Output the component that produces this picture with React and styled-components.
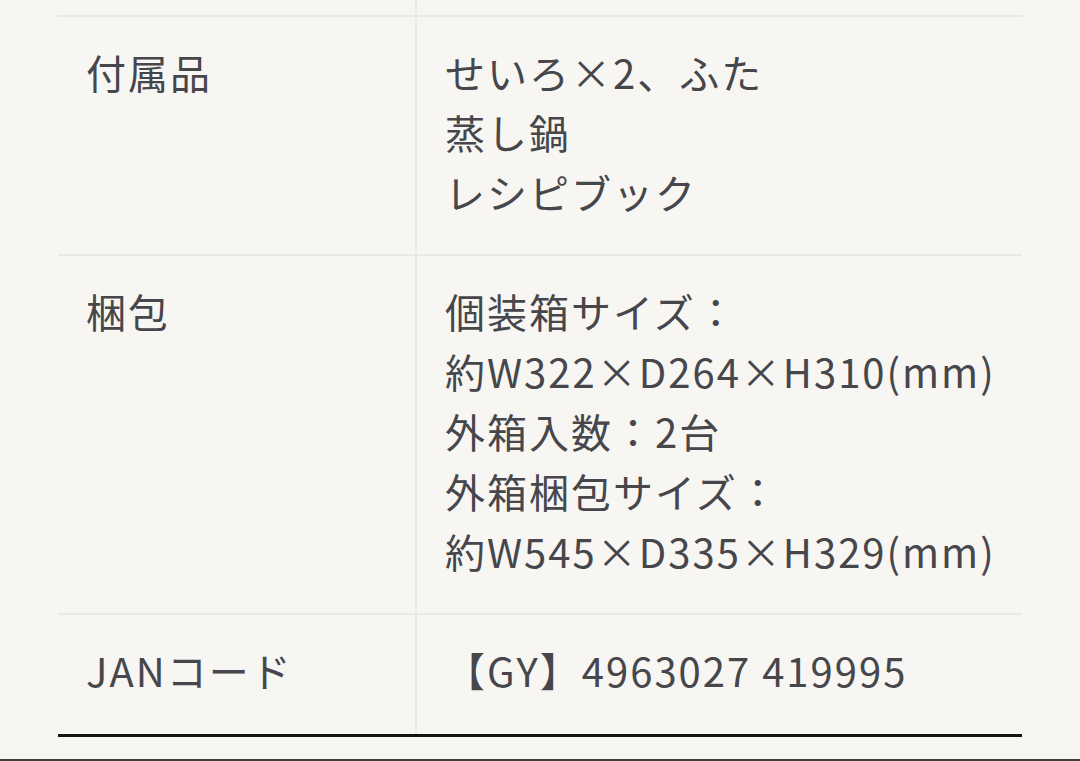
import React from "react";
import styled, { createGlobalStyle } from "styled-components";

const GlobalStyle = createGlobalStyle`
  html, body {
    margin: 0;
    padding: 0;
    background: #f7f6f3;
  }
  body {
    font-family: "Noto Sans CJK JP", "Noto Sans", sans-serif;
    color: #46464b;
  }
`;

const Page = styled.div`
  height: 761px;
  display: flex;
  flex-direction: column;
  overflow: hidden;
`;

const Content = styled.div`
  flex: 1;
  padding: 0 58px;
`;

const Table = styled.div`
  display: grid;
  grid-template-columns: 359px 1fr;
  border-bottom: 3px solid #141414;
`;

const Cell = styled.div`
  padding: ${(p) =>
    p.$tail ? "0" : p.$last ? "25px 0 34px 28px" : "25px 0 32px 28px"};
  height: ${(p) => (p.$tail ? "15px" : "auto")};
  border-top: ${(p) => (p.$first ? "none" : "2px solid #ebe9e5")};
  border-right: ${(p) => (p.$label ? "2px solid #ebe9e5" : "none")};
  font-size: 40px;
  line-height: 60px;
  letter-spacing: 0.05em;
  white-space: nowrap;
`;

const Value = styled(Cell)`
  padding-left: ${(p) => (p.$tail ? "0" : "28px")};
`;

const Line = styled.div``;

const BottomEdge = styled.div`
  height: 2px;
  background: #3d3d3d;
`;

const rows = [
  { label: "付属品", lines: ["せいろ×2、ふた", "蒸し鍋", "レシピブック"] },
  {
    label: "梱包",
    lines: [
      "個装箱サイズ：",
      "約W322×D264×H310(mm)",
      "外箱入数：2台",
      "外箱梱包サイズ：",
      "約W545×D335×H329(mm)",
    ],
  },
  { label: "JANコード", lines: ["【GY】4963027 419995"] },
];

const App = () => {
  return (
    <Page>
      <GlobalStyle />
      <Content>
        <Table>
          <Cell $label $tail $first />
          <Value $tail $first />
          {rows.map((row, i) => {
            const last = i === rows.length - 1;
            return (
              <React.Fragment key={row.label}>
                <Cell $label $last={last}>
                  {row.label}
                </Cell>
                <Value $last={last}>
                  {row.lines.map((line) => (
                    <Line key={line}>{line}</Line>
                  ))}
                </Value>
              </React.Fragment>
            );
          })}
        </Table>
      </Content>
      <BottomEdge />
    </Page>
  );
};

export default App;
